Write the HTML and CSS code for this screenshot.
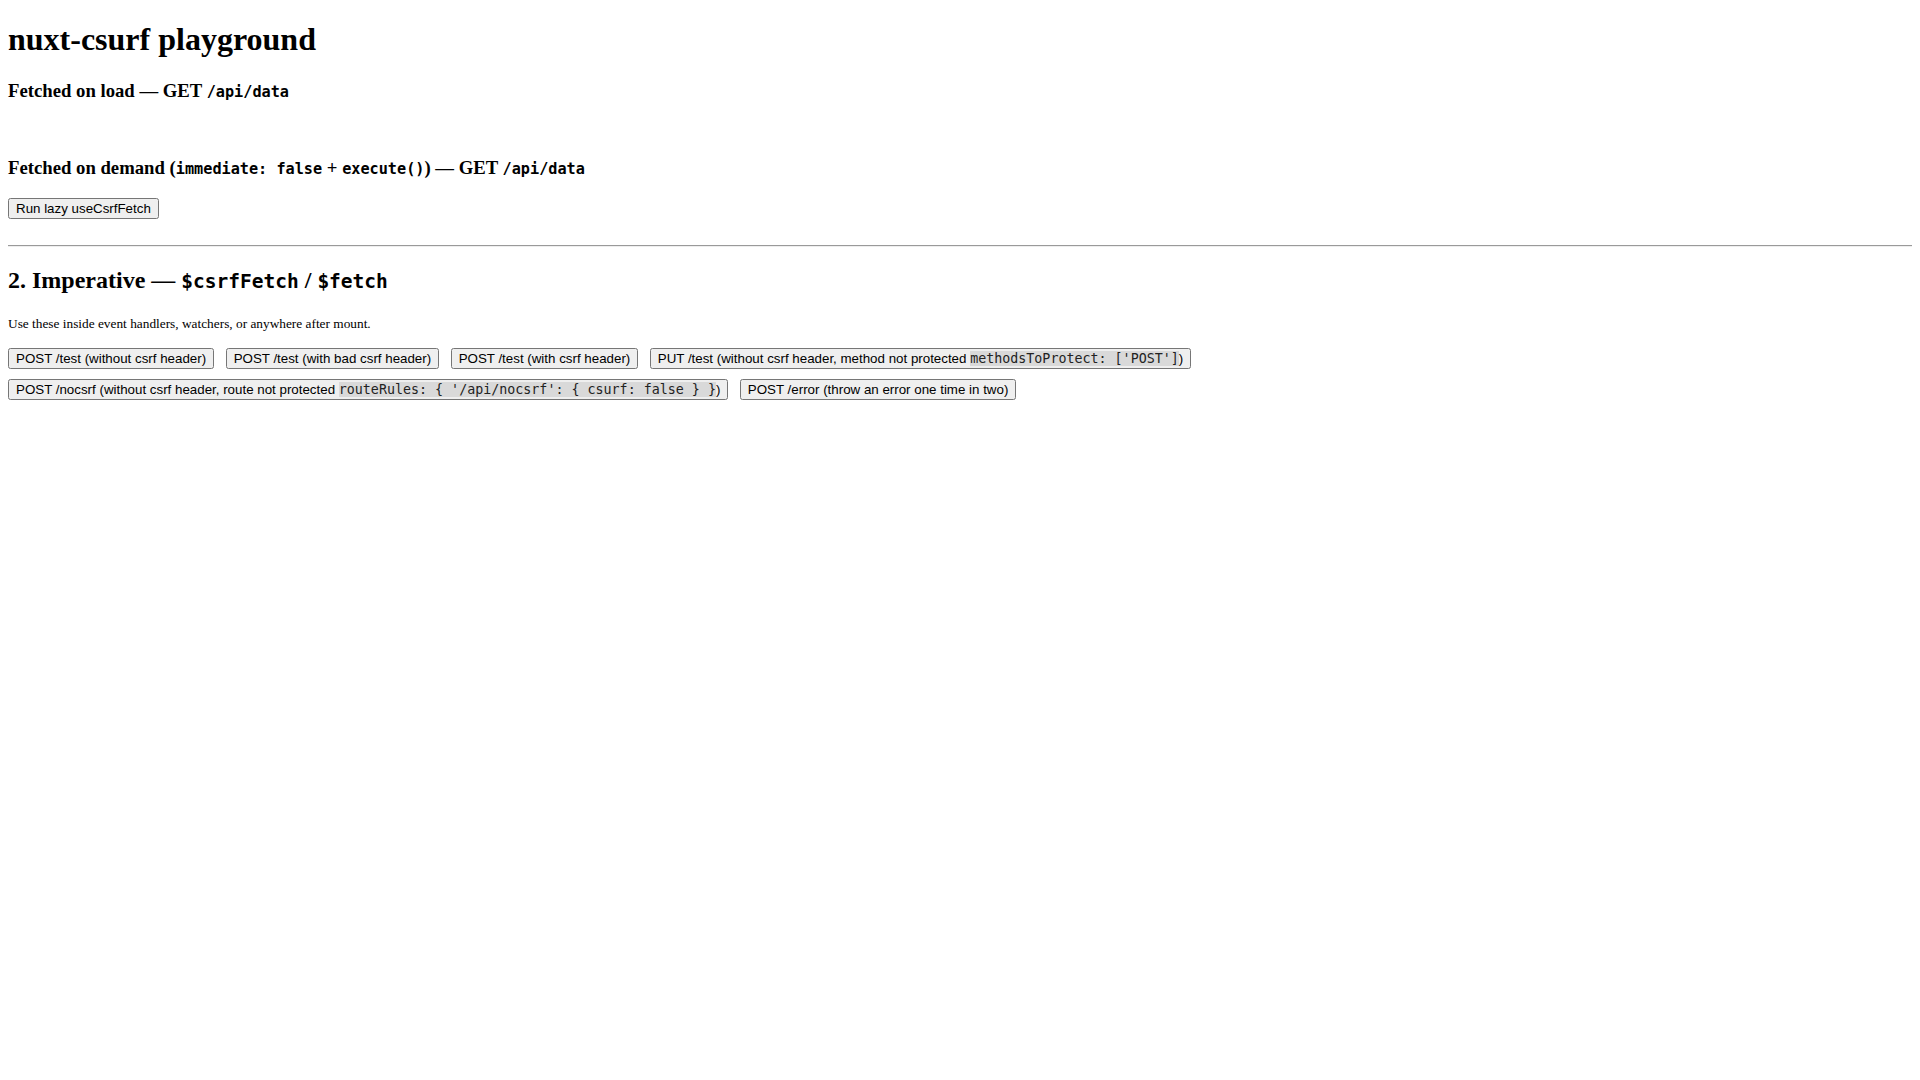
FILE: index.html
```html
<!DOCTYPE html>
<html lang="en">
<head>
<meta charset="utf-8">
<title>nuxt-csurf playground</title>
<link rel="stylesheet" href="styles.css">
</head>
<body>
<main class="page">
  <h1 class="title">nuxt-csurf playground</h1>
  <section class="section">
    <h3 class="subtitle">Fetched on load — GET <code class="code">/api/data</code></h3>
    <div class="result">&nbsp;</div>
    <h3 class="subtitle">Fetched on demand (<code class="code">immediate: false</code> + <code class="code">execute()</code>) — GET <code class="code">/api/data</code></h3>
    <div class="actions"><button class="btn" type="button">Run lazy useCsrfFetch</button></div>
    <div class="result">&nbsp;</div>
  </section>
  <hr class="divider">
  <section class="section">
    <h2 class="section-title">2. Imperative — <code class="code">$csrfFetch</code> / <code class="code">$fetch</code></h2>
    <p class="note"><small class="note-text">Use these inside event handlers, watchers, or anywhere after mount.</small></p>
    <div class="button-grid">
      <button class="btn" type="button">POST /test (without csrf header)</button>
      <button class="btn" type="button">POST /test (with bad csrf header)</button>
      <button class="btn" type="button">POST /test (with csrf header)</button>
      <button class="btn" type="button">PUT /test (without csrf header, method not protected <code class="btn-code">methodsToProtect: ['POST']</code>)</button>
      <button class="btn" type="button">POST /nocsrf (without csrf header, route not protected <code class="btn-code">routeRules: { '/api/nocsrf': { csurf: false } }</code>)</button>
      <button class="btn" type="button">POST /error (throw an error one time in two)</button>
    </div>
  </section>
</main>
</body>
</html>
```

FILE: styles.css
```css
html {
  background: #ffffff;
}

body {
  margin: 0;
  padding: 0 8px 8px;
  font-family: "Liberation Serif", "Times New Roman", serif;
  font-size: 16px;
  color: #000000;
}

.page {
  padding-top: 0.1px;
}

.title {
  font-size: 32px;
  font-weight: bold;
  margin: 21.34px 0 21.44px;
}

.subtitle {
  font-size: 18.72px;
  font-weight: bold;
  margin: 18.72px 0;
}

.section-title {
  font-size: 24px;
  font-weight: bold;
  margin: 19.92px 0;
}

.code {
  font-family: "DejaVu Sans Mono", monospace;
  font-size: 0.8125em;
  font-weight: bold;
}

.result {
  margin: 0;
}

.actions {
  display: flex;
  margin: 0;
}

.divider {
  margin: 8px 0;
  border: 0;
  border-top: 1px solid #9a9a9a;
  border-bottom: 1px solid #eeeeee;
  height: 0;
}

.note {
  margin: 16px 0;
}

.note-text {
  font-size: 13.333px;
}

.button-grid {
  display: flex;
  flex-wrap: wrap;
  align-items: flex-start;
  gap: 10px 11.5px;
}

.btn {
  font-family: "Liberation Sans", Arial, sans-serif;
  font-size: 13.333px;
  padding: 1px 6px;
  margin: 0;
}

.btn-code {
  font-family: "DejaVu Sans Mono", monospace;
  font-size: 13.333px;
  background: #d9d9d9;
  color: #222222;
}
```
